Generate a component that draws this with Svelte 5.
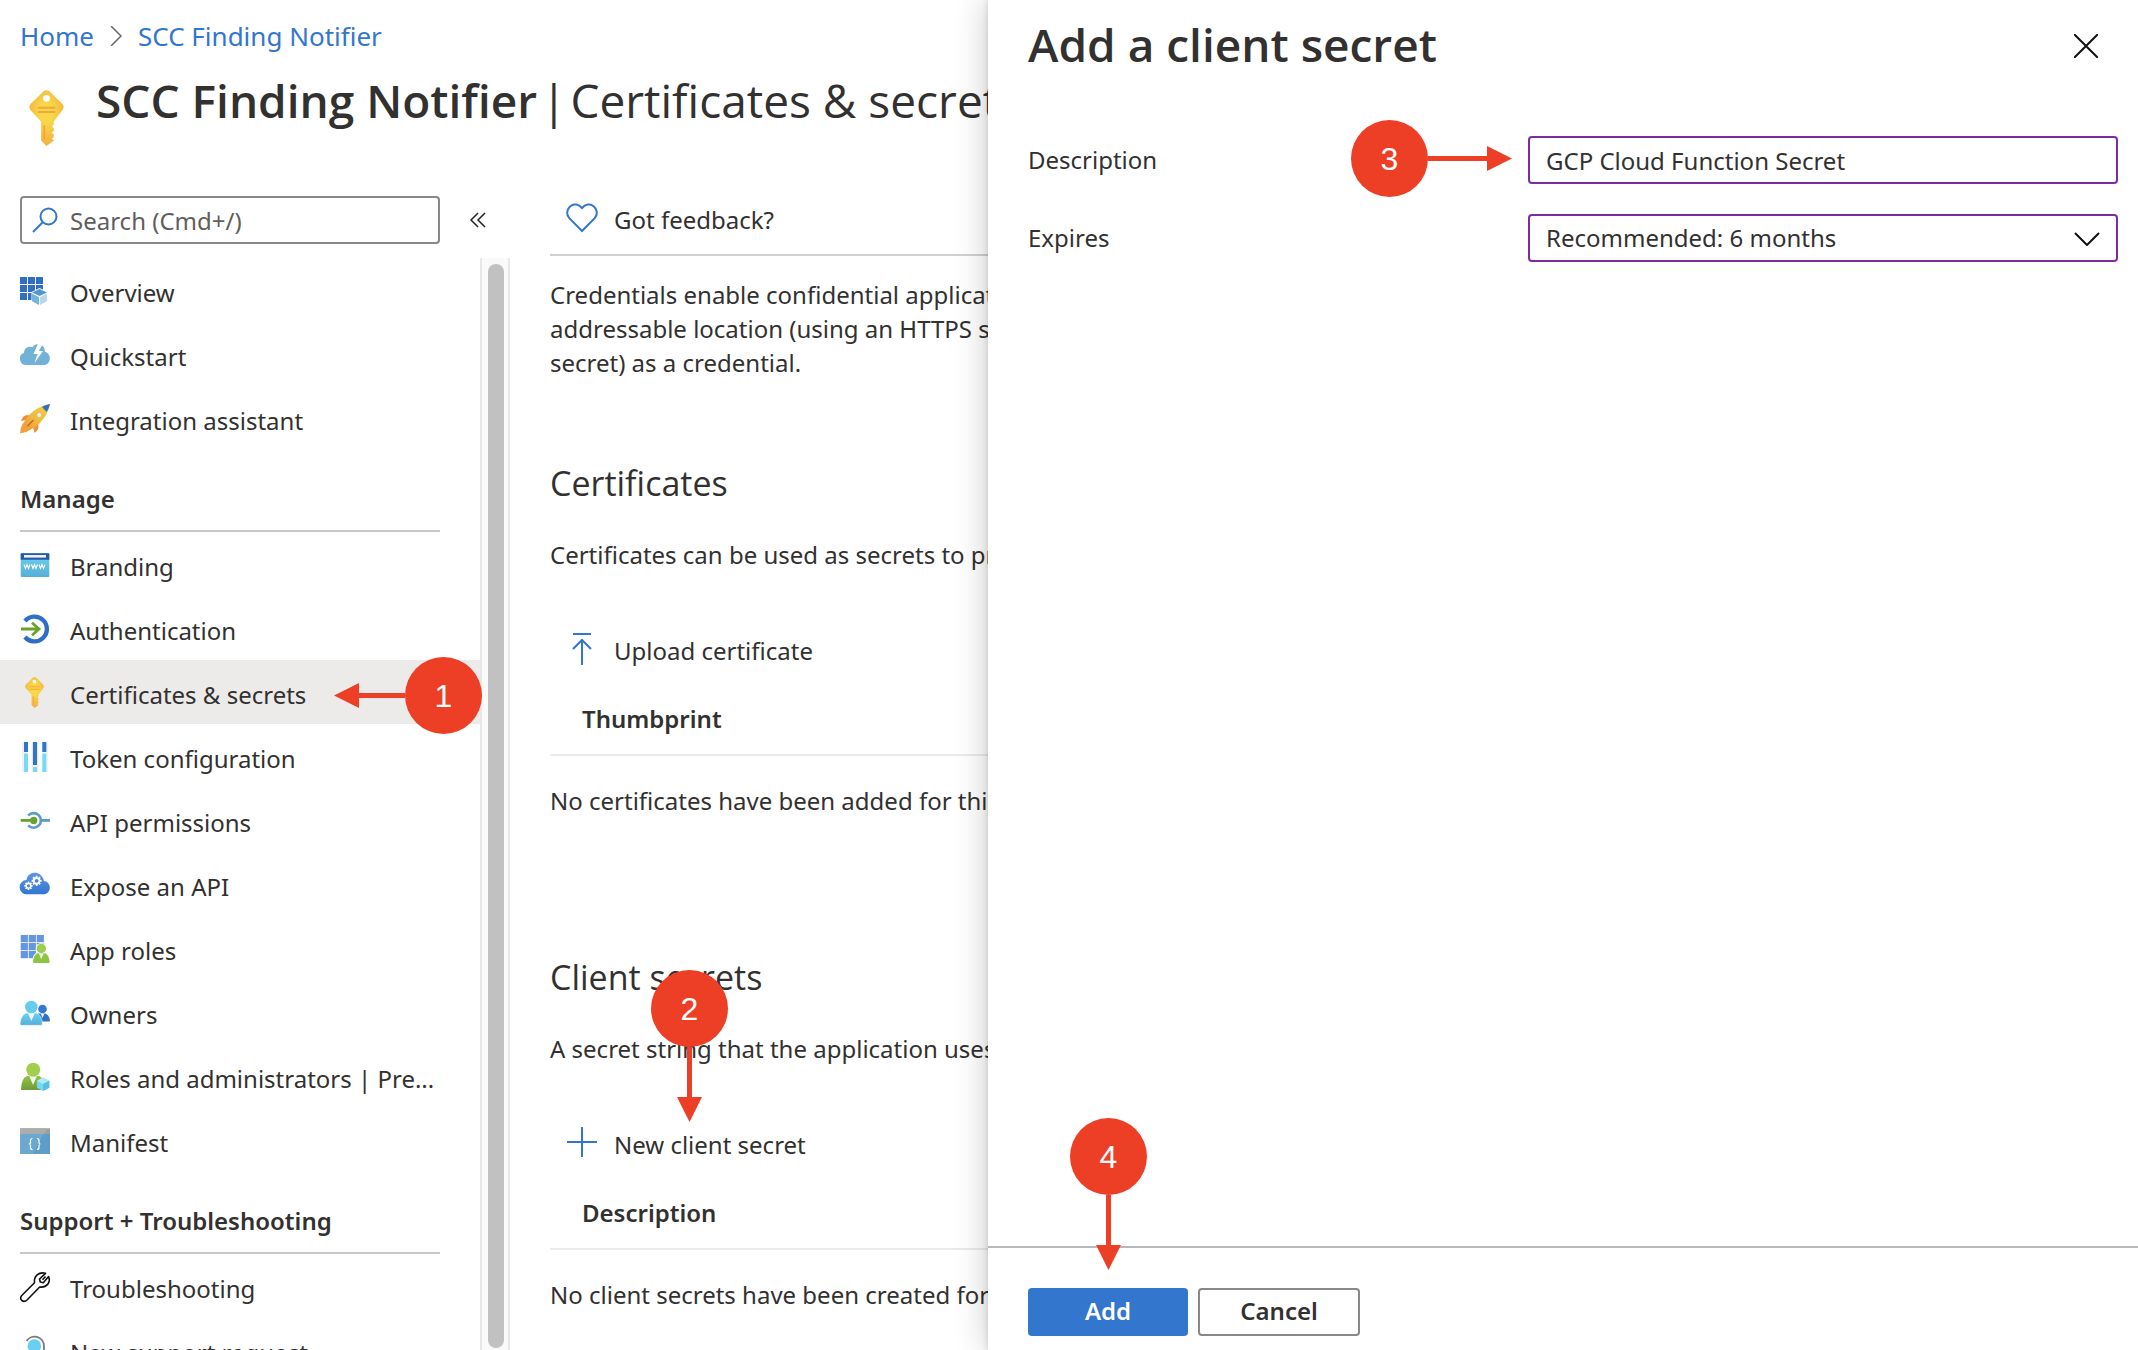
<script>
  const topItems = [
    { label: 'Overview', icon: 'overview' },
    { label: 'Quickstart', icon: 'quickstart' },
    { label: 'Integration assistant', icon: 'rocket' }
  ];
  const groups = [
    {
      title: 'Manage',
      items: [
        { label: 'Branding', icon: 'branding' },
        { label: 'Authentication', icon: 'auth' },
        { label: 'Certificates & secrets', icon: 'key', active: true },
        { label: 'Token configuration', icon: 'token' },
        { label: 'API permissions', icon: 'permissions' },
        { label: 'Expose an API', icon: 'expose' },
        { label: 'App roles', icon: 'roles' },
        { label: 'Owners', icon: 'owners' },
        { label: 'Roles and administrators | Pre...', icon: 'admins' },
        { label: 'Manifest', icon: 'manifest' }
      ]
    },
    {
      title: 'Support + Troubleshooting',
      items: [
        { label: 'Troubleshooting', icon: 'wrench' },
        { label: 'New support request', icon: 'support' }
      ]
    }
  ];
  const gridCells = [[0, 0], [8, 0], [16, 0], [0, 8], [8, 8], [16, 8], [0, 16], [8, 16]];
  const teeth = [0, 45, 90, 135, 180, 225, 270, 315];

  let description = $state('GCP Cloud Function Secret');
  let expires = $state('6');
</script>

{#snippet keyShape()}
  <path d="M8 .6q1.5-1 3 0L18.300 7.800q1.300 1.700 0 3.400L13.500 17.500V19l-.9 1.200 1 1.200v1.200l-1.200 1.100 1.200 1.100v1.200L12.400 26.900l1.200 1.100L9.500 31 6.500 28V17.500L.7 11.200q-1.300-1.700 0-3.400z" fill="url(#gold)" />
  <circle cx="9.5" cy="4.600" r="1.900" fill="#fff" />
  <path d="M4.800 9.800h9.600M4.800 12.200h9.600" stroke="#f2a73d" stroke-width="1.100" />
  <path d="M8.300 19.500v8" stroke="#f2a73d" stroke-width="1" />
{/snippet}

{#snippet gear(x, y, r)}
  <g transform="translate({x} {y})">
    {#each teeth as a}
      <path d="M0 0V-{r}" stroke="#fff" stroke-width={r * 0.4} transform="rotate({a})" />
    {/each}
    <circle r={r * 0.72} fill="#fff" />
    <circle r={r * 0.38} fill="#4c87de" />
  </g>
{/snippet}

{#snippet icon(name)}
  <svg class="nav-icon" viewBox="0 0 30 30" aria-hidden="true">
    {#if name === 'overview'}
      <g fill="#2f6fc4">
        {#each gridCells as [x, y]}<rect {x} y={y + 2} width="7" height="7" />{/each}
      </g>
      <path d="M19.500 13 28 17v9l-8.500 4.500L11.500 26v-9z" fill="#fff" />
      <path d="M19.500 14 27 17.500 19.500 21 12 17.500z" fill="#5498c8" />
      <path d="M12 18.500 19 22v8l-7-3.700z" fill="#74b6da" />
      <path d="M27 18.500 20 22v8l7-3.700z" fill="#b8d9eb" />
    {:else if name === 'quickstart'}
      <path d="M6.500 26A6.300 6.300 0 0 1 4 13.800C4 8.500 9 6.500 12.500 8.300 14 5.700 17 4.700 20 5.200q4.500 1.300 5 7.500c7 2 6.500 13.300-1.500 13.300z" fill="#72b2d7" />
      <path d="M18 4.500 13.500 15h4L14.500 24 23 12h-4.200L23 4.500z" fill="#fff" />
    {:else if name === 'rocket'}
      <path d="M9 12Q3 11 1 18l6-1zM18 21q2 5-3.500 9L13 24z" fill="#ee8f3b" />
      <path d="M3 20Q.500 24 0 30.500q6-.5 11-4z" fill="#f0a03c" />
      <path d="M30 1Q18 3 9 12 5 17 3 21l6 6q6-2 10-6Q28 12 30 1z" fill="url(#rocket)" />
      <path d="M30 1q-4 .7-8 3l4.700 5Q29 5 30 1z" fill="#2f6fcb" />
      <circle cx="19.300" cy="12" r="2.600" fill="#e8edf2" stroke="#d9a83a" stroke-width=".6" />
      <path d="M13.500 17 7.500 23" stroke="#d0632b" stroke-width="1.500" />
    {:else if name === 'branding'}
      <rect x=".7" y="4.300" width="28.600" height="23.700" rx="1" fill="url(#cyan)" />
      <path d="M.7 10.800V5.300q0-1 1-1h26.600q1 0 1 1v5.500z" fill="#2459a8" />
      <rect x="4" y="6" width="22" height="2.600" fill="#f0f0f0" />
      <path d="m4 15.500 1.500 4 1.500-4 1.500 4 1.500-4m1.500 0 1.500 4 1.500-4 1.500 4 1.500-4m1.500 0 1.500 4 1.500-4 1.500 4 1.500-4" fill="none" stroke="#fff" stroke-width="1.100" />
    {:else if name === 'auth'}
      <path d="M5 8A12.400 12.400 0 1 1 5 24" fill="none" stroke="#2e6fc3" stroke-width="4.400" />
      <path d="M1 16h18M12 9.800 19 16l-7 6.200" fill="none" stroke="#6aa329" stroke-width="2.800" />
    {:else if name === 'key'}
      <svg x="5" y="0" width="19" height="31" viewBox="0 0 19 31" overflow="visible">{@render keyShape()}</svg>
    {:else if name === 'token'}
      <path d="M3 1v30M27 1v30M12.300 1v30M17.700 1v30" stroke="#e3e3e3" stroke-width="1" />
      <path d="M6 1v10M24.300 1v10M15 1v23" stroke="#2f74cd" stroke-width="4" />
      <path d="M6 12.500V31M15 26v5M24.300 12.500V31" stroke="#76dcf5" stroke-width="4" />
    {:else if name === 'permissions'}
      <path d="M8.200 10.500a7.300 7.300 0 1 1 0 9.800" fill="none" stroke="#5a9bc9" stroke-width="2.600" />
      <path d="M22 15.400h8" stroke="#5a9bc9" stroke-width="2.800" />
      <path d="M.7 15.400H13" stroke="#69a32b" stroke-width="2.800" />
      <circle cx="13.700" cy="15.400" r="3.600" fill="#69a32b" />
    {:else if name === 'expose'}
      <path d="M7 25.300A7 7 0 0 1 6.500 11C8 1.500 21.500 1 24 12c8 .8 8 13.300-1 13.300z" fill="url(#cloud)" />
      {@render gear(8.5, 16.800, 4.200)}
      {@render gear(16.600, 11.800, 5)}
    {:else if name === 'roles'}
      <g fill="#6596e4">
        {#each gridCells as [x, y]}<rect x={x + 0.700} y={y + 2} width="7.200" height="7.200" />{/each}
      </g>
      <circle cx="21.300" cy="15.500" r="5.600" fill="#fff" />
      <path d="M12 30q.5-9 5-10.500h8.500Q30 21 30 30z" fill="#fff" />
      <circle cx="21.300" cy="15.500" r="4.700" fill="#97d04d" />
      <path d="M13 29q.5-7 4.500-8.700h7.800Q29 22 29.700 29q-.2 1-1 1H14q-1 0-1-1z" fill="#8cc63f" />
      <path d="m18.800 20.300 2.500 6 2.500-6z" fill="#f3f7ee" />
    {:else if name === 'owners'}
      <circle cx="22.500" cy="12" r="4.300" fill="#3377cf" />
      <path d="M18 16.500h7.500q4 2 4.500 7-.2.900-1 .9H19z" fill="#2f71cb" />
      <path d="m20.500 16.500 2 4.500 2-4.500z" fill="#e6eef8" />
      <path d="M0 27Q.500 18.500 6 16h10.500q5.500 2.500 6 11-.2 1.300-1.300 1.300H1.300Q.200 28.300 0 27z" fill="url(#cyan)" stroke="#fff" stroke-width=".5" />
      <path d="m7.800 16 3.500 8 3.500-8z" fill="#f3f9fc" />
      <circle cx="11.300" cy="10" r="6.300" fill="#68cdec" />
    {:else if name === 'admins'}
      <path d="M1 28q.5-11 6-13h12q5.500 2 6 13-.2 1-1.200 1H2q-1 0-1-1z" fill="url(#green)" />
      <path d="m9.300 15 3.800 9 3.800-9z" fill="#f3f7ee" />
      <circle cx="13.200" cy="8.800" r="7" fill="#a0cf4c" />
      <path d="m23 16.500 6.300 3.200v7L23 30l-6-3.300v-7z" fill="#74d9f3" />
      <path d="m23 16.500 6.300 3.200L23 23l-6-3.300z" fill="#b1eaf8" />
      <path d="M23 23v7l6.300-3.300v-7z" fill="#5bbde2" />
    {:else if name === 'manifest'}
      <path d="M0 8h30v21H0z" fill="#5c9dc9" />
      <path d="M0 8h24L13 29H0z" fill="#6ca8cf" />
      <path d="M0 3.300h30V9H0z" fill="#9f9f9f" />
      <path d="M0 3.300h27L24 9H0z" fill="#acacac" />
      <path d="M12.500 13.500q-2 0-2 2v2q0 1.500-1.500 1.500 1.500 0 1.500 1.500v2q0 2 2 2M17 13.500q2 0 2 2v2q0 1.500 1.500 1.500-1.500 0-1.500 1.500v2q0 2-2 2" fill="none" stroke="#fff" stroke-width="1.200" />
    {:else if name === 'wrench'}
      <path d="M1.800 24.500 14.500 11.700C13.500 5 19 .5 25.500 2.300L19.500 8l.8 3 3 .7 5.300-6.200C31 11.500 26.500 17 19.700 16L7 29c-3.700 3.500-8.500-1-5.200-4.500zM22.500 8.700 25.500 5.500" fill="none" stroke="#111" stroke-width="1.600" stroke-linejoin="round" />
    {:else if name === 'support'}
      <path d="M6.500 6A9.500 9.500 0 0 1 24 11v5" fill="none" stroke="#7a7a7a" stroke-width="1.800" />
      <circle cx="14.300" cy="11" r="6.800" fill="#69cff2" />
      <path d="M3 30q1-9 6-11h10.500q5 2 6 11z" fill="#5ab9de" />
    {/if}
  </svg>
{/snippet}

{#snippet callout(n, dir)}
  <span class="callout {dir}">
    <span class="disc">{n}</span><span class="shaft"></span><span class="head"></span>
  </span>
{/snippet}

{#snippet navItem(item)}
  <li>
    <a class="nav-item" class:active={item.active} href="#{item.icon}">
      {@render icon(item.icon)}
      <span class="nav-label">{item.label}</span>
    </a>
    {#if item.active}{@render callout(1, 'left')}{/if}
  </li>
{/snippet}

<svg class="defs" aria-hidden="true">
  <defs>
    <radialGradient id="gold" cx=".5" cy=".4" r=".6"><stop offset=".3" stop-color="#f8d848" /><stop offset="1" stop-color="#f3ae40" /></radialGradient>
    <linearGradient id="rocket" x1="1" y1="0" x2="0" y2="1"><stop offset="0" stop-color="#f3cf3e" /><stop offset=".5" stop-color="#efc03d" /><stop offset="1" stop-color="#ee953b" /></linearGradient>
    <linearGradient id="cyan" x1="0" y1="0" x2="0" y2="1"><stop offset="0" stop-color="#6bd3f0" /><stop offset="1" stop-color="#56aed6" /></linearGradient>
    <linearGradient id="cloud" x1="0" y1="0" x2="0" y2="1"><stop offset="0" stop-color="#5f93e6" /><stop offset="1" stop-color="#3277d0" /></linearGradient>
    <linearGradient id="green" x1="0" y1="0" x2="0" y2="1"><stop offset="0" stop-color="#93c443" /><stop offset="1" stop-color="#6f9c37" /></linearGradient>
  </defs>
</svg>

<div class="page">
  <header class="top">
    <nav class="crumbs" aria-label="Breadcrumb">
      <a href="#home">Home</a>
      <svg width="12" height="20" viewBox="0 0 12 20" aria-hidden="true"><path d="m1 0 10 10L1 20" fill="none" stroke="#666" stroke-width="1.500" /></svg>
      <a href="#app">SCC Finding Notifier</a>
    </nav>
    <div class="title-row">
      <svg class="title-key" viewBox="0 0 19 31" aria-hidden="true">{@render keyShape()}</svg>
      <h1><strong>SCC Finding Notifier</strong><span>|</span><span>Certificates &amp; secrets</span></h1>
    </div>
  </header>

  <div class="body">
    <aside class="sidebar">
      <div class="search-row">
        <label class="search">
          <svg width="26" height="26" viewBox="0 0 26 26" aria-label="Search"><circle cx="16.500" cy="9.500" r="8" fill="none" stroke="#3277cd" stroke-width="2" /><path d="M11 15 1 25" stroke="#3277cd" stroke-width="2" /></svg>
          <input type="text" placeholder="Search (Cmd+/)" />
        </label>
        <button class="collapse" aria-label="Collapse menu">
          <svg width="16" height="16" viewBox="0 0 16 16"><path d="M8 1 1 8l7 7M15 1 8 8l7 7" fill="none" stroke="#222" stroke-width="1.500" /></svg>
        </button>
      </div>
      <div class="nav-wrap">
        <nav class="menu" aria-label="Resource menu">
          <ul>
            {#each topItems as item}{@render navItem(item)}{/each}
          </ul>
          {#each groups as group}
            <h2 class="group">{group.title}</h2>
            <ul>
              {#each group.items as item}{@render navItem(item)}{/each}
            </ul>
          {/each}
        </nav>
        <div class="track"><div class="thumb"></div></div>
      </div>
    </aside>

    <main>
      <div class="toolbar">
        <button class="command">
          <svg width="32" height="32" viewBox="0 0 32 32" aria-hidden="true"><path d="M16 29 3.300 16.200C-2 9.500 4 1.500 10.500 2.500 13 2.800 14.500 4.200 16 6c1.500-1.800 3-3.200 5.500-3.500C28 1.500 34 9.500 28.700 16.200z" fill="none" stroke="#3277cd" stroke-width="2" /></svg>
          Got feedback?
        </button>
      </div>
      <p class="intro">
        Credentials enable confidential applications to identify themselves to the authentication service<br />
        addressable location (using an HTTPS scheme). For a higher level of assurance, use a certificate<br />
        secret) as a credential.
      </p>

      <section>
        <h2>Certificates</h2>
        <p>Certificates can be used as secrets to prove the application's identity when requesting a token.</p>
        <div class="action">
          <button class="command">
            <svg width="32" height="32" viewBox="0 0 32 32" aria-hidden="true"><path d="M7 1h18M16 8v24M7 16l9-9 9 9" fill="none" stroke="#3277cd" stroke-width="2" /></svg>
            Upload certificate
          </button>
        </div>
        <table>
          <thead><tr><th>Thumbprint</th></tr></thead>
          <tbody><tr><td>No certificates have been added for this application.</td></tr></tbody>
        </table>
      </section>

      <section>
        <h2>Client secrets</h2>
        <p>A secret string that the application uses to prove its identity when requesting a token.</p>
        <div class="action">
          <button class="command">
            <svg width="32" height="32" viewBox="0 0 32 32" aria-hidden="true"><path d="M1 15h30M16 0v30" stroke="#3277cd" stroke-width="2" /></svg>
            New client secret
          </button>
          {@render callout(2, 'down')}
        </div>
        <table>
          <thead><tr><th>Description</th></tr></thead>
          <tbody><tr><td>No client secrets have been created for this application.</td></tr></tbody>
        </table>
      </section>
    </main>
  </div>

  <form class="blade" onsubmit={(e) => e.preventDefault()}>
    <div class="blade-head">
      <h2>Add a client secret</h2>
      <button type="button" class="close" aria-label="Close">
        <svg width="24" height="24" viewBox="0 0 24 24"><path d="m0 0 24 24M24 0 0 24" stroke="#111" stroke-width="2" /></svg>
      </button>
    </div>
    <div class="fields">
      <div class="field">
        <label for="description">Description</label>
        <div class="control">
          <input id="description" type="text" bind:value={description} />
          {@render callout(3, 'right')}
        </div>
      </div>
      <div class="field">
        <label for="expires">Expires</label>
        <div class="control">
          <select id="expires" bind:value={expires}>
            <option value="6">Recommended: 6 months</option>
            <option value="12">12 months</option>
          </select>
          <svg class="chevron" width="26" height="14" viewBox="0 0 26 14" aria-hidden="true"><path d="m1 1 12 12L25 1" fill="none" stroke="#111" stroke-width="2" /></svg>
        </div>
      </div>
    </div>
    <footer>
      <div class="add-wrap">
        <button class="primary">Add</button>
        {@render callout(4, 'down')}
      </div>
      <button type="button" class="secondary">Cancel</button>
    </footer>
  </form>
</div>

<style>
  :global(body) {
    background: #fff;
  }
  .page,
  .page * {
    box-sizing: border-box;
  }
  .page {
    position: relative;
    display: flex;
    flex-direction: column;
    height: 100vh;
    overflow: hidden;
    color: #323130;
    font: 24px/34px 'Noto Sans', 'Open Sans', sans-serif;
  }
  .defs {
    position: absolute;
    width: 0;
    height: 0;
  }
  h1, h2, p, ul {
    margin: 0;
    padding: 0;
    list-style: none;
  }
  a {
    color: #3277cd;
    text-decoration: none;
  }
  button, input, select {
    margin: 0;
    padding: 0;
    border: 0;
    background: none;
    color: inherit;
    font: inherit;
  }
  svg {
    display: block;
    flex: none;
  }

  .top {
    padding: 18px 20px 66px;
  }
  .crumbs {
    display: flex;
    align-items: center;
    gap: 16px;
    font-size: 26px;
    line-height: 36px;
  }
  .title-row {
    display: flex;
    align-items: center;
    gap: 32px;
    margin-top: 16px;
    padding-left: 9px;
    height: 60px;
  }
  .title-key {
    width: 35px;
    height: 56px;
    margin-top: 36px;
    overflow: visible;
  }
  h1, .blade-head h2 {
    font-family: 'Open Sans', 'Noto Sans', sans-serif;
    font-size: 46px;
    font-weight: 600;
    line-height: 60px;
    white-space: nowrap;
  }
  h1 {
    display: flex;
    gap: 4px;
  }
  h1 strong {
    font-weight: 600;
  }
  h1 span {
    font-weight: 400;
  }

  .body {
    display: flex;
    flex: 1;
    min-height: 0;
  }
  .sidebar {
    display: flex;
    flex-direction: column;
    flex: none;
    width: 510px;
  }
  .search-row {
    display: flex;
    align-items: center;
    gap: 30px;
    padding-left: 20px;
    margin-bottom: 14px;
  }
  .search {
    display: flex;
    align-items: center;
    gap: 12px;
    width: 420px;
    height: 48px;
    padding: 0 10px;
    border: 2px solid #8a8886;
    border-radius: 4px;
  }
  .search input {
    flex: 1;
    min-width: 0;
    height: 44px;
    outline: 0;
  }
  .search input::placeholder {
    color: #605e5c;
    opacity: 1;
  }
  .nav-wrap {
    display: flex;
    flex: 1;
    min-height: 0;
  }
  .menu {
    flex: 1;
  }
  .menu li {
    position: relative;
  }
  .nav-item {
    display: flex;
    align-items: center;
    gap: 20px;
    height: 64px;
    padding-left: 20px;
    color: #323130;
  }
  .nav-item.active {
    background: #edebe9;
  }
  .nav-icon {
    width: 30px;
    height: 30px;
    overflow: visible;
  }
  .nav-label {
    padding-top: 6px;
    white-space: nowrap;
  }
  .group {
    height: 82px;
    margin: 0 40px 0 20px;
    padding-top: 32px;
    border-bottom: 2px solid #c8c8c8;
    font-size: 24px;
    font-weight: 600;
  }
  .track {
    width: 30px;
    padding: 6px 6px 2px;
    border: solid #e8e8e8;
    border-width: 0 2px;
    background: #fafafa;
  }
  .thumb {
    height: 100%;
    width: 16px;
    border-radius: 8px;
    background: #c1c1c1;
  }

  main {
    flex: 1;
    min-width: 0;
    padding-left: 40px;
    white-space: nowrap;
  }
  .toolbar {
    height: 60px;
    padding: 7px 0 0;
    border-bottom: 2px solid #d0d0d0;
  }
  .command {
    display: flex;
    align-items: flex-start;
    gap: 16px;
    padding-left: 16px;
    cursor: pointer;
  }
  .command svg {
    margin-top: -1px;
  }
  .intro {
    padding: 22px 0 79px;
  }
  section {
    margin-bottom: 135px;
  }
  section h2 {
    margin-bottom: 31px;
    font-family: 'Open Sans', 'Noto Sans', sans-serif;
    font-size: 34px;
    font-weight: 400;
    line-height: 48px;
  }
  .action {
    position: relative;
    margin-top: 62px;
  }
  table {
    width: 100%;
    border-collapse: collapse;
  }
  th {
    padding: 34px 0 18px 32px;
    border-bottom: 2px solid #eaeaea;
    font-weight: 600;
    text-align: left;
  }
  td {
    padding: 28px 0 0;
  }

  .blade {
    position: absolute;
    top: 0;
    right: 0;
    bottom: 0;
    display: flex;
    flex-direction: column;
    width: 1150px;
    max-width: 100%;
    background: #fff;
    box-shadow: 0 0 32px rgba(0, 0, 0, 0.22), 0 0 6px rgba(0, 0, 0, 0.14);
  }
  .blade-head {
    display: flex;
    align-items: center;
    justify-content: space-between;
    padding: 14px 40px 62px;
  }
  .close {
    margin-top: 4px;
  }
  .fields {
    display: flex;
    flex: 1;
    flex-direction: column;
    gap: 30px;
    padding: 0 20px 0 40px;
  }
  .field {
    display: grid;
    grid-template-columns: 500px 1fr;
    align-items: center;
  }
  .control {
    position: relative;
  }
  .control input,
  .control select {
    display: block;
    width: 100%;
    height: 48px;
    padding: 0 16px;
    border: 2px solid #7f2ba0;
    border-radius: 4px;
    appearance: none;
  }
  .chevron {
    position: absolute;
    top: 18px;
    right: 18px;
    pointer-events: none;
  }
  footer {
    display: flex;
    gap: 10px;
    padding: 40px 40px 14px;
    border-top: 2px solid #b8b8b8;
  }
  .add-wrap {
    position: relative;
  }
  .primary,
  .secondary {
    display: block;
    width: 160px;
    height: 48px;
    padding-bottom: 2px;
    border-radius: 4px;
    font-weight: 600;
  }
  .primary {
    background: #3277cd;
    color: #fff;
  }
  .secondary {
    width: 162px;
    border: 2px solid #8a8886;
  }

  .callout {
    position: absolute;
    z-index: 2;
    display: flex;
    align-items: center;
    pointer-events: none;
  }
  .disc {
    display: grid;
    flex: none;
    place-items: center;
    width: 77px;
    height: 77px;
    border-radius: 50%;
    background: #ed3f26;
    color: #fff;
    font: 32px/36px 'Liberation Sans', Arial, sans-serif;
  }
  .shaft {
    flex: 1;
    background: #ed3f26;
  }
  .head {
    width: 25px;
    height: 25px;
    background: #ed3f26;
  }
  .left {
    flex-direction: row-reverse;
    top: -3px;
    left: 334px;
    width: 148px;
  }
  .left .head {
    clip-path: polygon(100% 0, 100% 100%, 0 50%);
  }
  .right {
    top: -16px;
    right: calc(100% + 16px);
    width: 161px;
  }
  .right .head {
    clip-path: polygon(0 0, 0 100%, 100% 50%);
  }
  .left .shaft,
  .right .shaft {
    height: 5px;
  }
  .down {
    flex-direction: column;
    bottom: calc(100% + 6px);
    left: 101px;
    height: 152px;
  }
  .down .shaft {
    width: 5px;
  }
  .down .head {
    clip-path: polygon(0 0, 100% 0, 50% 100%);
  }
  .add-wrap .down {
    bottom: calc(100% + 18px);
    left: 42px;
  }
</style>
